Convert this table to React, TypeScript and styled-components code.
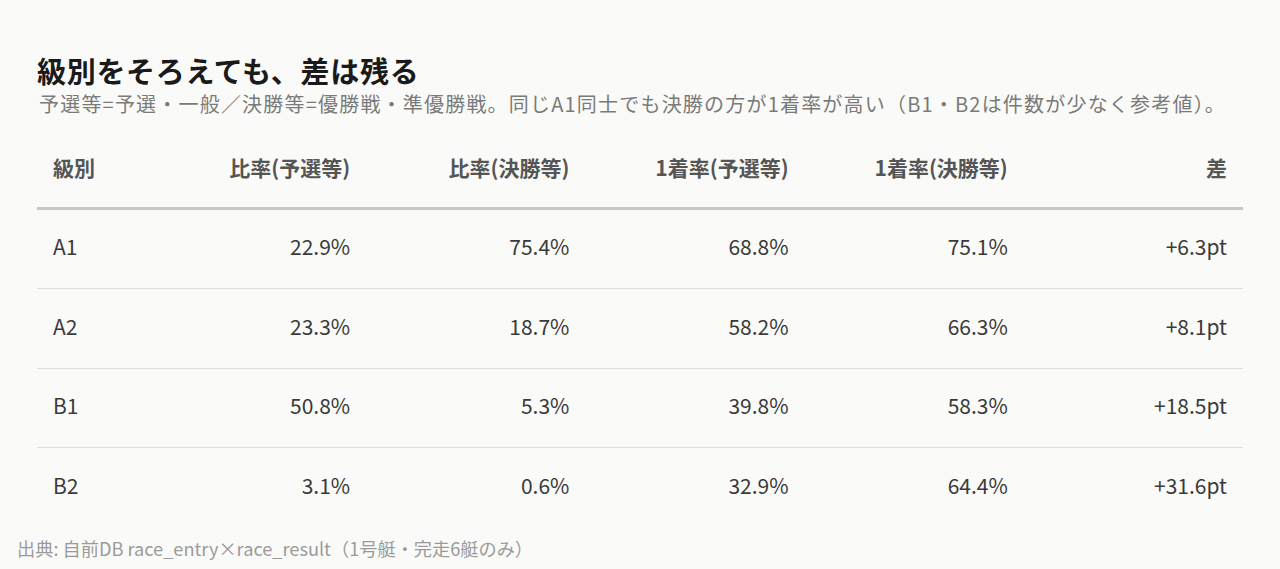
import React from "react";
import styled, { createGlobalStyle } from "styled-components";

const Global = createGlobalStyle`
  html, body { margin: 0; padding: 0; background: #fafaf8; }
  body { font-family: "Noto Sans CJK JP", "Noto Sans", sans-serif; color: #222; }
`;

const Page = styled.div`
  display: flex;
  flex-direction: column;
  padding: 52px 0 0;
`;

const Main = styled.div`
  padding: 0 37px;
  display: flex;
  flex-direction: column;
`;

const Title = styled.h1`
  margin: 0;
  font-size: 29px;
  line-height: 36px;
  font-weight: 700;
  color: #1a1a1a;
  letter-spacing: 0.7px;
`;

const Subtitle = styled.p`
  margin: 0;
  font-size: 20px;
  line-height: 31px;
  color: #7a7a7a;
  letter-spacing: 1.2px;
  padding-left: 2px;
`;

const Table = styled.div`
  margin-top: 8.5px;
  display: grid;
  grid-template-columns: 110px repeat(5, 1fr);
`;

const HeadCell = styled.div<{ $align?: "left" | "right" }>`
  padding: 0 16px;
  height: 79px;
  display: flex;
  align-items: center;
  justify-content: ${(p) => (p.$align === "left" ? "flex-start" : "flex-end")};
  font-size: 21px;
  font-weight: 700;
  color: #555;
  border-bottom: 3px solid #c8c8bf;
`;

const Cell = styled.div<{ $align?: "left" | "right"; $last?: boolean }>`
  box-sizing: border-box;
  padding: 0 16px 5px;
  height: 79.6px;
  display: flex;
  align-items: center;
  justify-content: ${(p) => (p.$align === "left" ? "flex-start" : "flex-end")};
  font-size: 21px;
  color: #3a3a3a;
  border-bottom: 1px solid ${(p) => (p.$last ? "transparent" : "#e0e0da")};
`;

const Footer = styled.p`
  margin: 8px 0 0;
  padding: 0 17px;
  font-size: 18.2px;
  line-height: 24px;
  color: #9a9a9a;
`;

const headers = ["級別", "比率(予選等)", "比率(決勝等)", "1着率(予選等)", "1着率(決勝等)", "差"];
const rows = [
  ["A1", "22.9%", "75.4%", "68.8%", "75.1%", "+6.3pt"],
  ["A2", "23.3%", "18.7%", "58.2%", "66.3%", "+8.1pt"],
  ["B1", "50.8%", "5.3%", "39.8%", "58.3%", "+18.5pt"],
  ["B2", "3.1%", "0.6%", "32.9%", "64.4%", "+31.6pt"],
];

export default function App() {
  return (
    <Page>
      <Global />
      <Main>
        <Title>級別をそろえても、差は残る</Title>
        <Subtitle>
          予選等=予選・一般／決勝等=優勝戦・準優勝戦。同じA1同士でも決勝の方が1着率が高い（B1・B2は件数が少なく参考値）。
        </Subtitle>
        <Table>
          {headers.map((h, i) => (
            <HeadCell key={h} $align={i === 0 ? "left" : "right"}>
              {h}
            </HeadCell>
          ))}
          {rows.map((r, ri) =>
            r.map((c, ci) => (
              <Cell key={`${ri}-${ci}`} $align={ci === 0 ? "left" : "right"} $last={ri === rows.length - 1}>
                {c}
              </Cell>
            ))
          )}
        </Table>
      </Main>
      <Footer>出典: 自前DB race_entry×race_result（1号艇・完走6艇のみ）</Footer>
    </Page>
  );
}
